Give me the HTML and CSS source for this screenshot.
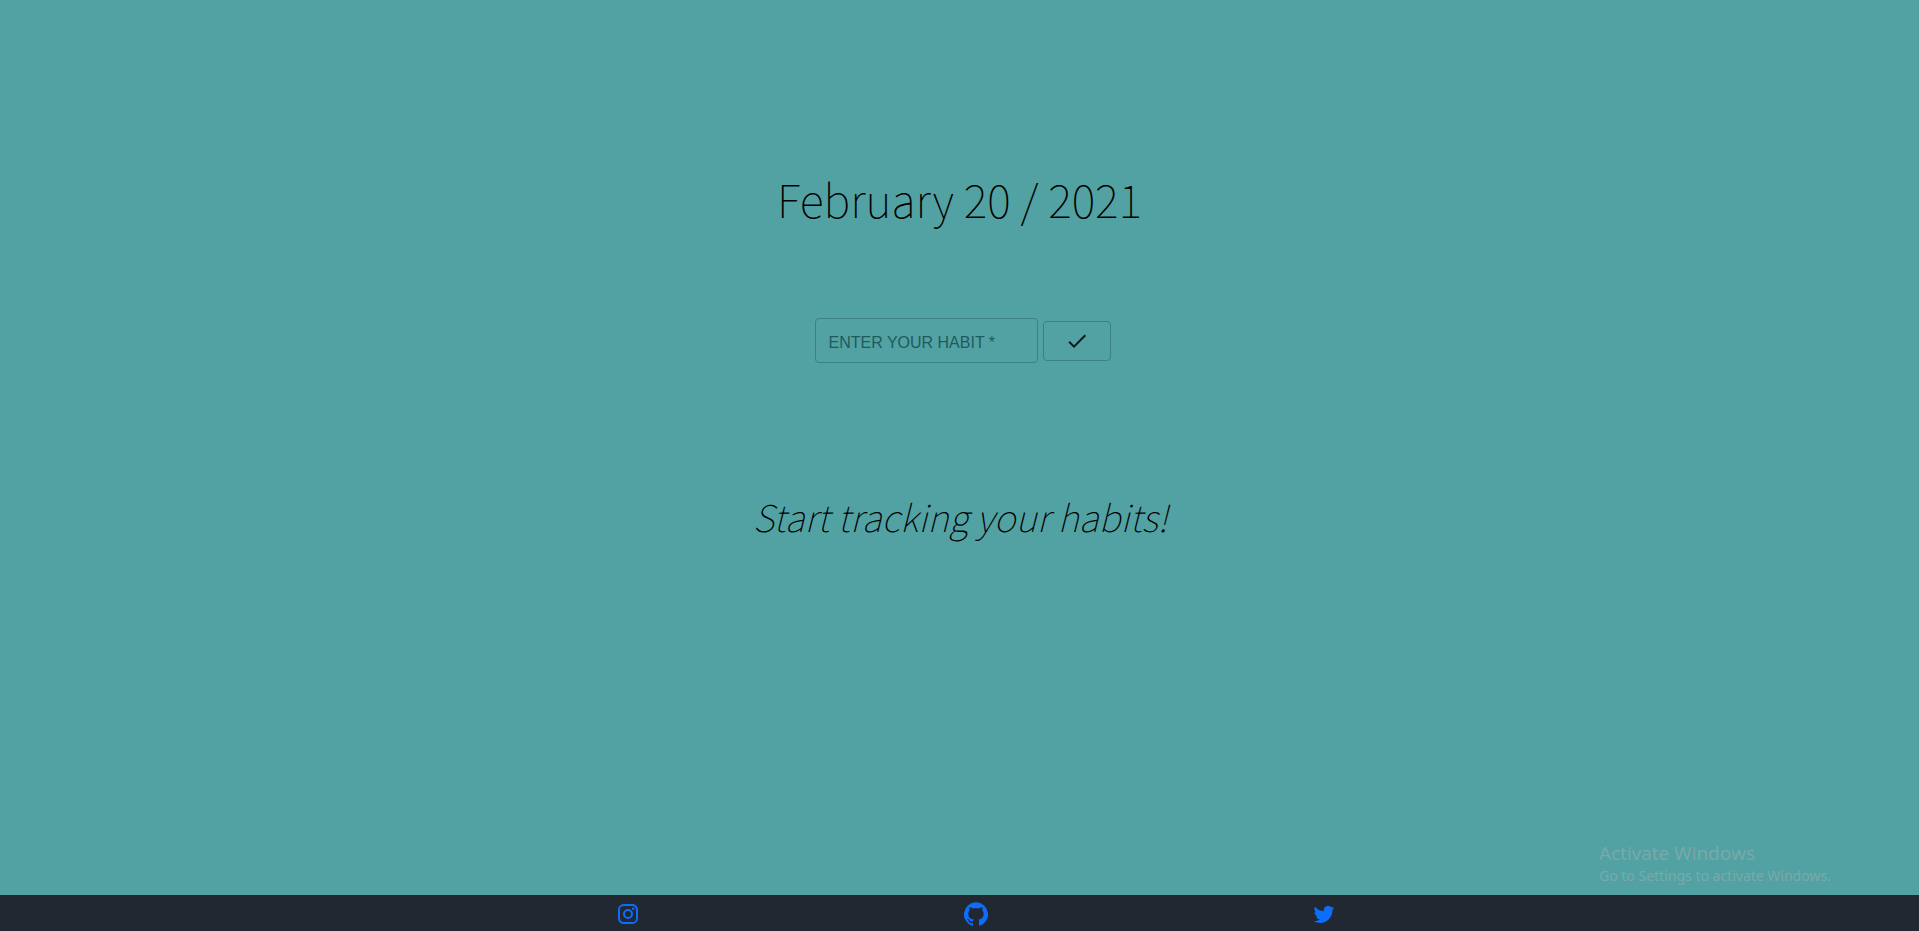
FILE: index.html
```html
<!DOCTYPE html>
<html lang="en">
<head>
<meta charset="utf-8">
<title>Habit Tracker</title>
<link rel="stylesheet" href="styles.css">
</head>
<body>
<main class="page">
  <h1 class="date">February 20 / 2021</h1>
  <form class="habit-form">
    <input class="habit-input" type="text" aria-label="Enter your habit" placeholder="ENTER YOUR HABIT *" required>
    <button class="habit-submit" type="submit" aria-label="Add habit">
      <svg class="check" viewBox="0 0 24 24" aria-hidden="true"><path d="M9 16.17L4.83 12l-1.42 1.41L9 19 21 7l-1.41-1.41z"/></svg>
    </button>
  </form>
  <h2 class="tagline">Start tracking your habits!</h2>
</main>
<aside class="watermark">
  <p class="watermark-title">Activate Windows</p>
  <p class="watermark-text">Go to Settings to activate Windows.</p>
</aside>
<footer class="footer">
  <nav class="social">
    <a class="social-link" href="#instagram" aria-label="Instagram"><svg class="icon" viewBox="0 0 24 24"><path d="M7.8 2h8.4C19.4 2 22 4.6 22 7.8v8.4a5.8 5.8 0 0 1-5.8 5.8H7.8C4.6 22 2 19.4 2 16.2V7.8A5.8 5.8 0 0 1 7.8 2m-.2 2A3.6 3.6 0 0 0 4 7.6v8.8C4 18.39 5.61 20 7.6 20h8.8a3.6 3.6 0 0 0 3.6-3.6V7.6C20 5.61 18.39 4 16.4 4H7.6m9.65 1.5a1.25 1.25 0 0 1 0 2.5 1.25 1.25 0 0 1 0-2.5M12 7a5 5 0 0 1 0 10 5 5 0 0 1 0-10m0 2a3 3 0 0 0 0 6 3 3 0 0 0 0-6z"/></svg></a>
    <a class="social-link" href="#github" aria-label="GitHub"><svg class="icon" viewBox="0 0 24 24"><path d="M12 .3a12 12 0 0 0-3.8 23.4c.6.1.8-.3.8-.6v-2c-3.3.7-4-1.6-4-1.6-.6-1.4-1.4-1.8-1.4-1.8-1-.7.1-.7.1-.7 1.2 0 1.9 1.2 1.9 1.2 1 1.8 2.8 1.3 3.5 1 0-.8.4-1.3.7-1.6-2.7-.3-5.5-1.3-5.5-6 0-1.2.5-2.3 1.3-3.1-.2-.4-.6-1.6 0-3.2 0 0 1-.3 3.4 1.2a11.500 11.500 0 0 1 6 0c2.300-1.500 3.300-1.200 3.300-1.200.6 1.600.2 2.800 0 3.200.9.8 1.300 1.900 1.300 3.200 0 4.600-2.800 5.600-5.500 5.900.5.4.9 1 .9 2.200v3.300c0 .3.1.7.8.6A12 12 0 0 0 12 .3"/></svg></a>
    <a class="social-link" href="#twitter" aria-label="Twitter"><svg class="icon" viewBox="0 0 24 24"><path d="M22.46 6c-.77.35-1.6.58-2.46.69.88-.53 1.56-1.37 1.88-2.38-.83.5-1.75.85-2.72 1.05C18.37 4.5 17.26 4 16 4c-2.35 0-4.27 1.92-4.27 4.29 0 .34.04.67.11.98C8.28 9.090 5.110 7.380 3 4.790c-.37.63-.58 1.370-.58 2.150 0 1.490.75 2.810 1.910 3.560-.71 0-1.370-.2-1.950-.5v.030c0 2.080 1.480 3.820 3.440 4.210a4.220 4.220 0 0 1-1.930.07 4.280 4.280 0 0 0 4 2.980 8.521 8.521 0 0 1-5.330 1.840c-.34 0-.68-.02-1.020-.06C3.440 20.290 5.700 21 8.120 21 16 21 20.330 14.460 20.330 8.790c0-.19 0-.37-.01-.56.84-.6 1.560-1.360 2.140-2.230z"/></svg></a>
  </nav>
</footer>
</body>
</html>
```
FILE: styles.css
```css
* { box-sizing: border-box; }

body {
  margin: 0;
  min-height: 100vh;
  display: flex;
  flex-direction: column;
  background: #52a2a3;
  color: #000;
  font-family: "Noto Sans CJK SC", "Noto Sans", sans-serif;
}

.page {
  flex: 1;
  display: flex;
  flex-direction: column;
  align-items: center;
  padding-top: 167px;
}

.date {
  margin: 0;
  font-size: 45px;
  line-height: 64px;
  font-weight: 100;
}

.habit-form {
  display: flex;
  align-items: center;
  gap: 5px;
  margin: 87px 0 0 6px;
}

.habit-input,
.habit-submit {
  border: 1px solid #3c8182;
  border-radius: 4px;
  background: transparent;
}

.habit-input {
  width: 223px;
  height: 45px;
  padding: 5px 13px 0;
  font-family: "Liberation Sans", sans-serif;
  font-size: 16px;
  color: #000;
}

.habit-input::placeholder {
  color: #215a5b;
  opacity: 1;
}

.habit-submit {
  display: flex;
  align-items: center;
  justify-content: center;
  width: 68px;
  height: 40px;
  padding: 0;
}

.check {
  width: 24px;
  height: 24px;
  fill: #0b1b1b;
}

.tagline {
  margin: 125px 0 0 2px;
  font-size: 37px;
  line-height: 56px;
  font-weight: 100;
  font-style: italic;
}

.watermark {
  position: absolute;
  right: 80px;
  bottom: 45px;
  min-width: 240px;
  color: #7ba9aa;
}

.watermark-title,
.watermark-text { margin: 0; }

.watermark-title {
  font-family: "Open Sans", sans-serif;
  font-size: 19px;
  line-height: 26px;
}

.watermark-text {
  font-family: "Noto Sans", sans-serif;
  font-size: 14px;
  line-height: 20px;
}

.footer {
  padding: 7px 0 5px 32px;
  background: #212831;
}

.social {
  display: grid;
  grid-template-columns: repeat(3, minmax(24px, 348px));
  justify-content: center;
}

.social-link {
  justify-self: center;
  display: flex;
  color: #0d6efd;
}

.icon {
  width: 24px;
  height: 24px;
  fill: currentColor;
}
```
